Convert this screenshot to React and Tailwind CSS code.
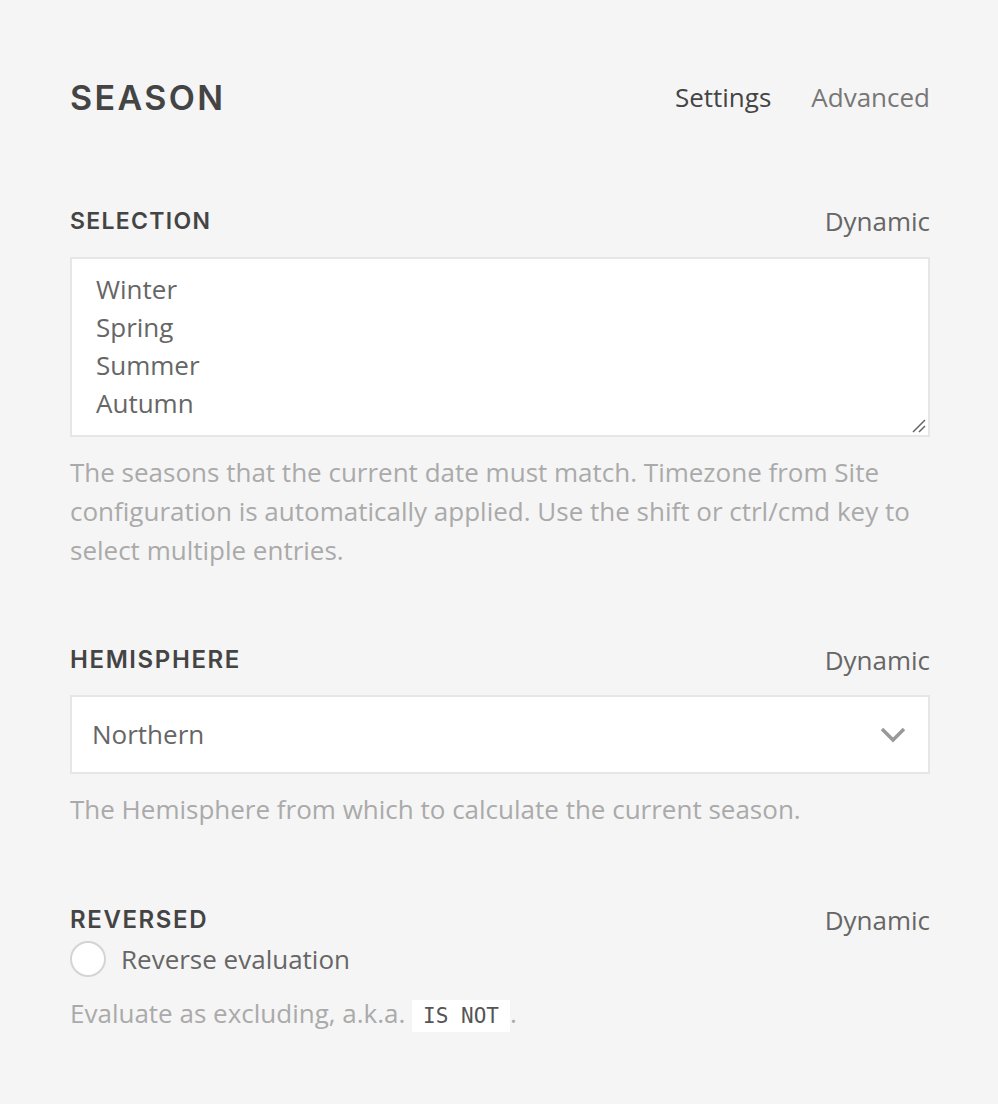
export default function App() {
  const heading = { fontFamily: "Inter, 'Liberation Sans', sans-serif" };
  const body = { fontFamily: "'Open Sans', 'Liberation Sans', sans-serif" };

  const seasons = ["Winter", "Spring", "Summer", "Autumn"];

  return (
    <div className="min-h-[1104px] w-[998px] bg-[#f5f5f5] pl-[70px] pr-[68px] pt-[73px] pb-10" style={body}>
      {/* header */}
      <div className="flex h-[48px] items-center justify-between">
        <h1 className="text-[34px] font-semibold tracking-[2.4px] text-[#444]" style={heading}>
          SEASON
        </h1>
        <div className="flex gap-[40px] text-[26px]">
          <span className="text-[#444]">Settings</span>
          <span className="text-[#777]">Advanced</span>
        </div>
      </div>

      {/* selection */}
      <div className="mt-[84px] flex h-[32px] items-center justify-between">
        <span className="text-[23px] font-semibold tracking-[1.3px] text-[#444]" style={heading}>
          SELECTION
        </span>
        <span className="text-[26px] text-[#666]">Dynamic</span>
      </div>
      <div className="relative mt-[20px] h-[180px] border-2 border-[#e6e6e6] bg-white pl-[24px] pt-[11px]">
        {seasons.map((s) => (
          <div key={s} className="text-[26px] leading-[38px] text-[#666]">
            {s}
          </div>
        ))}
        <svg className="absolute bottom-[2px] right-[2px]" width="14" height="14" viewBox="0 0 14 14">
          <path d="M1 13 L13 1 M7 13 L13 7" stroke="#666" strokeWidth="1.5" fill="none" />
        </svg>
      </div>
      <p className="mt-[16px] text-[26px] leading-[39px] text-[#aaa]">
        The seasons that the current date must match. Timezone from Site configuration is automatically applied. Use the shift or ctrl/cmd key to select multiple entries.
      </p>

      {/* hemisphere */}
      <div className="mt-[74px] flex h-[32px] items-center justify-between">
        <span className="text-[24px] font-semibold tracking-[1.6px] text-[#444]" style={heading}>
          HEMISPHERE
        </span>
        <span className="text-[26px] text-[#666]">Dynamic</span>
      </div>
      <div className="mt-[19px] flex h-[79px] items-center justify-between border-2 border-[#e6e6e6] bg-white pl-[20px] pr-[22px]">
        <span className="text-[26px] text-[#666]">Northern</span>
        <svg width="26" height="16" viewBox="0 0 26 16">
          <path d="M2 2 L13 13 L24 2" stroke="#999" strokeWidth="3.5" fill="none" />
        </svg>
      </div>
      <p className="mt-[16px] text-[26px] leading-[39px] text-[#aaa]">
        The Hemisphere from which to calculate the current season.
      </p>

      {/* reversed */}
      <div className="mt-[75px] flex h-[32px] items-center justify-between">
        <span className="text-[24px] font-semibold tracking-[1.6px] text-[#444]" style={heading}>
          REVERSED
        </span>
        <span className="text-[26px] text-[#666]">Dynamic</span>
      </div>
      <div className="mt-[3px] flex h-[40px] items-center gap-[15px]">
        <span className="h-[36px] w-[36px] rounded-full border-2 border-[#d4d4d4] bg-white" />
        <span className="text-[26px] text-[#666]">Reverse evaluation</span>
      </div>
      <p className="mt-[15px] text-[26px] leading-[39px] text-[#aaa]">
        Evaluate as excluding, a.k.a.{" "}
        <code className="bg-white px-[11px] py-[4px] text-[21px] text-[#555]" style={{ fontFamily: "'DejaVu Sans Mono', 'Liberation Mono', monospace" }}>
          IS NOT
        </code>
        .
      </p>
    </div>
  );
}
